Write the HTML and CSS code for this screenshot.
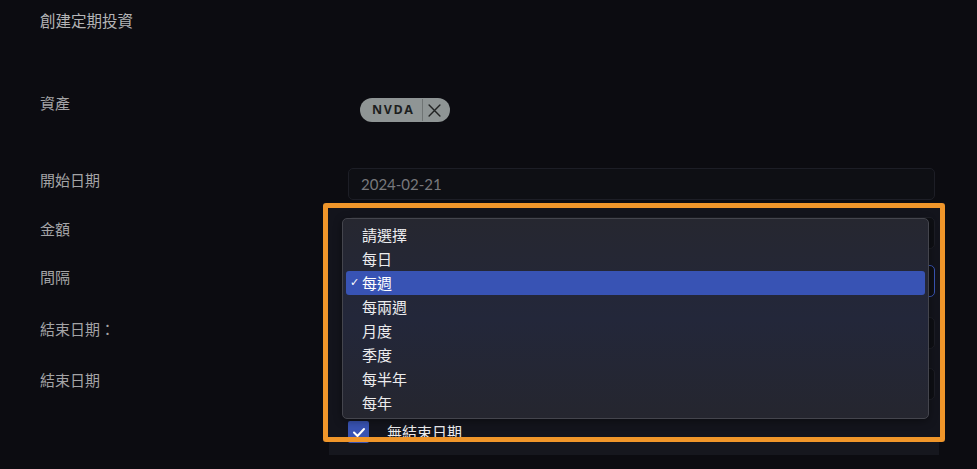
FILE: index.html
```html
<!DOCTYPE html>
<html lang="zh-Hant">
<head>
<meta charset="utf-8">
<title>創建定期投資</title>
<link rel="stylesheet" href="styles.css">
</head>
<body>
<main class="page">
  <h1 class="title">創建定期投資</h1>
  <div class="highlight-fill"></div>
  <div class="form">
    <div class="row row-asset">
      <div class="label">資產</div>
      <div class="field field-chip">
        <span class="chip">
          <span class="chip-text">NVDA</span>
          <span class="chip-sep"></span>
          <svg class="chip-x" viewBox="0 0 12 12" width="13" height="13"><path d="M1 1 L11 11 M11 1 L1 11" stroke="#222424" stroke-width="1.3" fill="none" stroke-linecap="round"/></svg>
        </span>
      </div>
    </div>
    <div class="row row-date">
      <div class="label">開始日期</div>
      <div class="field"><div class="input input-muted">2024-02-21</div></div>
    </div>
    <div class="row row-amount">
      <div class="label">金額</div>
      <div class="field"><div class="input"></div></div>
    </div>
    <div class="row row-interval">
      <div class="label">間隔</div>
      <div class="field"><div class="input input-focus"></div></div>
    </div>
    <div class="row row-end">
      <div class="label">結束日期：</div>
      <div class="field"><div class="input"></div></div>
    </div>
    <div class="row row-end2">
      <div class="label">結束日期</div>
      <div class="field"><div class="input"></div></div>
    </div>
    <div class="row row-check">
      <div class="label"></div>
      <div class="field check-field">
        <span class="checkbox"><svg viewBox="0 0 20 20" width="20" height="20"><path d="M5 10.5 L8.5 14 L15 7" stroke="#ffffff" stroke-width="2" fill="none" stroke-linecap="round" stroke-linejoin="round"/></svg></span>
        <span class="check-label">無結束日期</span>
      </div>
    </div>
  </div>

  <div class="highlight"></div>

  <ul class="dropdown">
    <li class="option">請選擇</li>
    <li class="option">每日</li>
    <li class="option selected"><span class="tick">✓</span>每週</li>
    <li class="option">每兩週</li>
    <li class="option">月度</li>
    <li class="option">季度</li>
    <li class="option">每半年</li>
    <li class="option">每年</li>
  </ul>
</main>
</body>
</html>
```

FILE: styles.css
```css
* { box-sizing: border-box; }

html, body {
  margin: 0;
  padding: 0;
  background: #0c0c11;
  width: 977px;
  height: 469px;
  overflow: hidden;
}

body {
  font-family: "Noto Sans CJK TC", "Noto Sans", sans-serif;
  color: #a4a4a6;
}

.page {
  position: relative;
  padding: 10px 0 0 40px;
  height: 469px;
}

.title {
  margin: 0;
  font-size: 15.5px;
  line-height: 20px;
  font-weight: 400;
  color: #b4b4b6;
}

.form {
  position: relative;
  display: flex;
  flex-direction: column;
  margin-top: 61px;
}

.row {
  display: grid;
  grid-template-columns: 308px 587px;
  align-items: start;
  height: 32px;
}

.row-date { margin-top: 45px; }
.row-amount { margin-top: 17px; }
.row-interval { margin-top: 16px; }
.row-end { margin-top: 20px; }
.row-end2 { margin-top: 19px; }

.row-check {
  margin-top: 21px;
  height: 22px;
}

.label {
  font-size: 15px;
  line-height: 20px;
  padding-top: 2px;
  color: #a4a4a6;
}

.field { height: 32px; }

.field-chip {
  padding: 4px 0 0 12px;
}

.chip {
  display: inline-flex;
  align-items: center;
  height: 24px;
  width: 90px;
  padding: 0 9px 0 12px;
  border-radius: 12px;
  background: #8f9595;
}

.chip-text {
  font-family: "Open Sans", "DejaVu Sans", sans-serif;
  font-weight: 700;
  font-size: 12.5px;
  letter-spacing: 1.6px;
  color: #1c1e1e;
  line-height: 24px;
}

.chip-sep {
  width: 1px;
  height: 22px;
  background: #6f7474;
  margin: 0 5px 0 7px;
}

.chip-x { display: block; }

.input {
  height: 32px;
  border: 1px solid #1d1e26;
  border-radius: 5px;
  background: #0e0f14;
  padding: 0 12px;
  font-family: Lato, "Open Sans", sans-serif;
  font-size: 15px;
  line-height: 30px;
}

.input-muted { color: #78787c; }

.input-focus {
  border-color: #3a55b5;
}

.check-field {
  display: flex;
  align-items: center;
  gap: 18px;
  height: 22px;
}

.checkbox {
  width: 21px;
  height: 22px;
  background: #3953b3;
  border-radius: 2px;
  display: flex;
  align-items: center;
  justify-content: center;
}

.checkbox svg { display: block; }

.check-label {
  font-size: 15px;
  line-height: 20px;
  color: #ececee;
}

.highlight-fill {
  position: absolute;
  left: 323px;
  top: 203px;
  width: 622px;
  height: 239px;
  background: #13141c;
  box-shadow: 0 19px 0 -6px #16171e;
}

.highlight {
  position: absolute;
  left: 323px;
  top: 203px;
  width: 622px;
  height: 239px;
  border: 5px solid #f0962a;
  border-radius: 3px;
}

.dropdown {
  position: absolute;
  left: 342px;
  top: 218px;
  width: 587px;
  height: 201px;
  margin: 0;
  padding: 4px 3px 5px 3px;
  list-style: none;
  background: linear-gradient(180deg, #262730 0%, #23273a 50%, #25262f 100%);
  border: 1px solid #44454d;
  border-radius: 5px;
  box-shadow: 0 2px 8px rgba(0, 0, 0, 0.4);
}

.option {
  position: relative;
  height: 24px;
  line-height: 24px;
  padding-left: 16px;
  font-size: 15px;
  color: #ececee;
  border-radius: 3px;
}

.option.selected {
  background: #3853b4;
  color: #ffffff;
}

.tick {
  position: absolute;
  left: 4px;
  top: 0;
  font-family: "DejaVu Sans", sans-serif;
  font-size: 11px;
  color: #ffffff;
}
```
